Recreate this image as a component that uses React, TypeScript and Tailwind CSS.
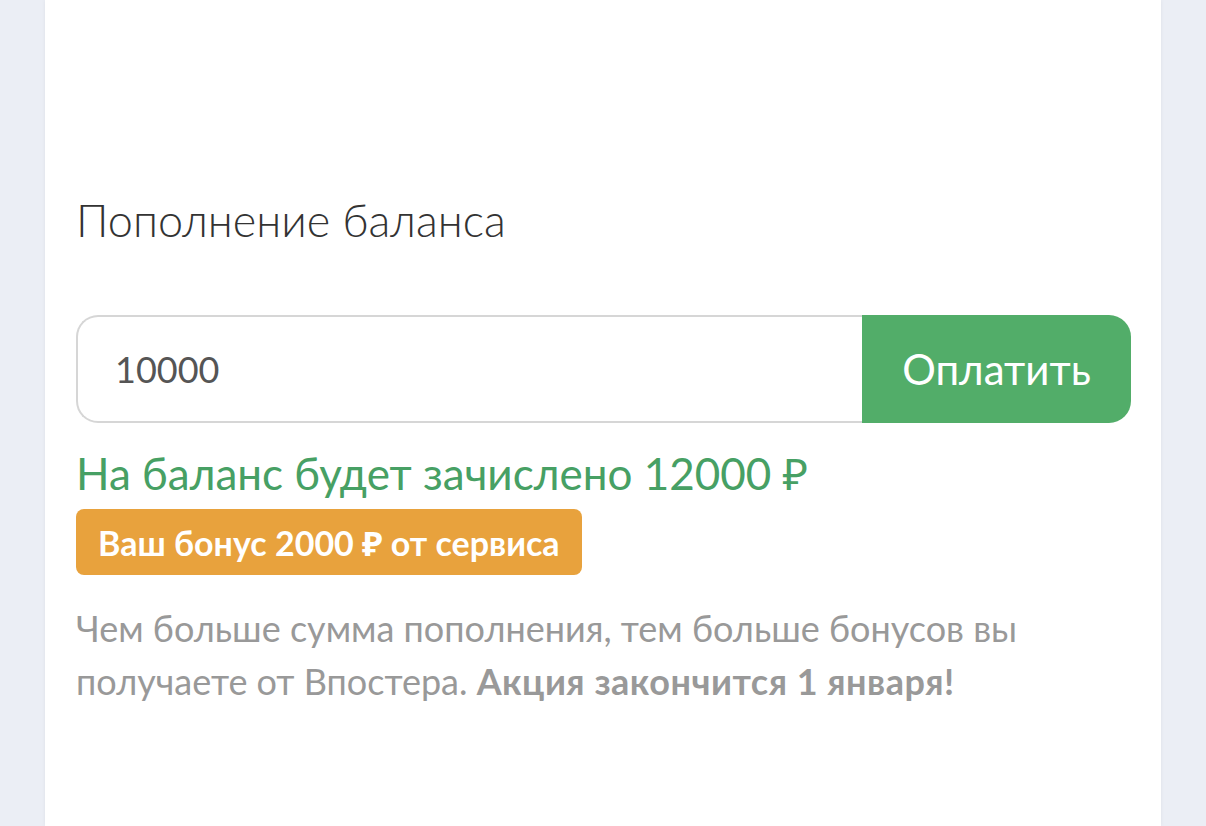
import { useState } from "react";

/* Balance top-up card — amount input, pay button, bonus info */
export default function App() {
  const [amount, setAmount] = useState("10000");
  const value = parseInt(amount, 10) || 0;
  const bonus = value >= 10000 ? 2000 : 0;

  return (
    <div
      className="min-h-screen w-full bg-[#ebeef5] flex"
      style={{ fontFamily: "Lato, 'Noto Sans', sans-serif" }}
    >
      <div className="ml-[45px] w-[1116px] min-h-[826px] bg-white shadow-[0_0_4px_rgba(0,0,0,0.06)] pl-[31px] pr-[30px] pt-[192px]">
        <h2 className="text-[45px] font-light leading-[56px] text-[#333]">Пополнение баланса</h2>

        <div className="mt-[67px] flex h-[108px]">
          <input
            value={amount}
            onChange={(e) => setAmount(e.target.value)}
            className="flex-1 min-w-0 rounded-l-[22px] border-2 border-r-0 border-[#d6d6d6] pl-[37px] text-[36px] text-[#555] outline-none"
          />
          <button className="w-[269px] rounded-r-[22px] bg-[#52ad69] text-[42px] text-white">
            Оплатить
          </button>
        </div>

        <p className="mt-[22px] text-[44px] leading-[56px] text-[#47a064]">
          На баланс будет зачислено {value + bonus} ₽
        </p>

        <div className="mt-[8px] inline-flex h-[66px] items-center rounded-[8px] bg-[#e8a23d] px-[22px] text-[34px] font-bold text-white">
          Ваш бонус {bonus} ₽ от сервиса
        </div>

        <p className="mt-[27px] text-[36px] leading-[53px] text-[#999]">
          Чем больше сумма пополнения, тем больше бонусов вы получаете от Впостера.{" "}
          <b className="font-bold tracking-[0.5px]">Акция закончится 1 января!</b>
        </p>
      </div>
    </div>
  );
}
